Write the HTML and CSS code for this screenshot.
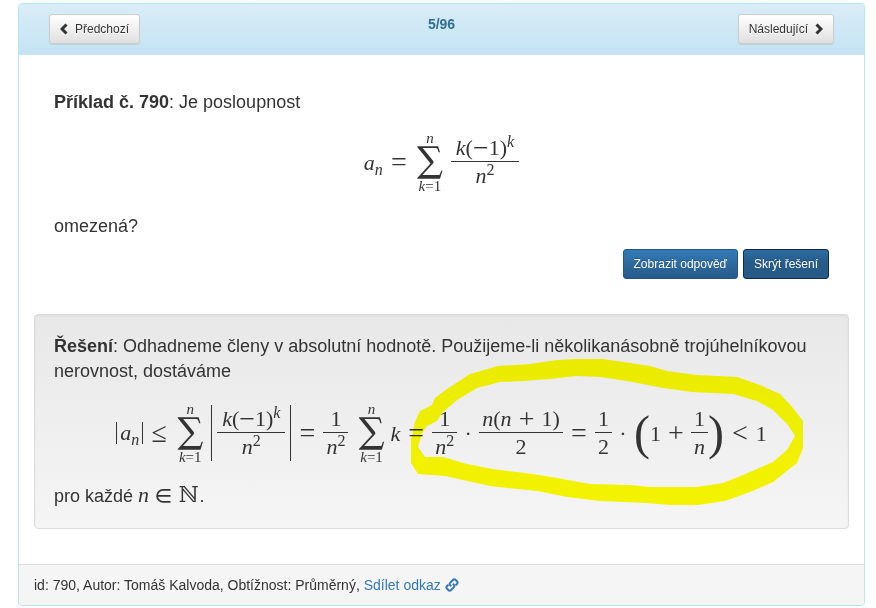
FILE: index.html
```html
<!DOCTYPE html>
<html lang="cs">
<head>
  <meta charset="UTF-8" />
  <title>Příklad č. 790</title>
  <link rel="stylesheet" href="styles.css">
</head>
<body>
<main class="panel">
  <header class="panel-heading">
    <button class="btn btn-default" type="button">
      <svg class="chevron" viewBox="0 0 8 12" aria-hidden="true"><path d="M6.5 1.5 2 6l4.500 4.500" /></svg>
      Předchozí
    </button>
    <h3 class="counter">5/96</h3>
    <button class="btn btn-default" type="button">
      Následující
      <svg class="chevron" viewBox="0 0 8 12" aria-hidden="true"><path d="M1.500 1.500 6 6l-4.500 4.500" /></svg>
    </button>
  </header>

  <div class="panel-body">
    <section class="task">
      <p><strong>Příklad č. 790</strong>: Je posloupnost</p>
      <div class="math">
        <span><i>a</i><sub><i>n</i></sub></span>
        <span class="rel">=</span>
        <span class="sum"><i>n</i><b>∑</b><span><i>k</i>=1</span></span>
        <span class="frac frac-wide"><span><i>k</i>(<span class="minus">−</span>1)<sup><i>k</i></sup></span><span><i>n</i><sup>2</sup></span></span>
      </div>
      <p>omezená?</p>
      <div class="actions">
        <button class="btn btn-primary" type="button">Zobrazit odpověď</button>
        <button class="btn btn-primary active" type="button">Skrýt řešení</button>
      </div>
    </section>

    <section class="well">
      <p><strong>Řešení</strong>: Odhadneme členy v absolutní hodnotě. Použijeme-li několikanásobně trojúhelníkovou nerovnost, dostáváme</p>
      <div class="math">
        <span class="abs"><i>a</i><sub><i>n</i></sub></span>
        <span class="rel">≤</span>
        <span class="sum"><i>n</i><b>∑</b><span><i>k</i>=1</span></span>
        <span class="abs abs-tall"><span class="frac frac-wide"><span><i>k</i>(<span class="minus">−</span>1)<sup><i>k</i></sup></span><span><i>n</i><sup>2</sup></span></span></span>
        <span class="rel">=</span>
        <span class="frac"><span>1</span><span><i>n</i><sup>2</sup></span></span>
        <span class="sum"><i>n</i><b>∑</b><span><i>k</i>=1</span></span>
        <i>k</i>
        <span class="rel">=</span>
        <span class="frac"><span>1</span><span><i>n</i><sup>2</sup></span></span>
        <span class="dot">·</span>
        <span class="frac"><span><i>n</i>(<i>n</i><span class="plus">+</span>1)</span><span>2</span></span>
        <span class="rel">=</span>
        <span class="frac"><span>1</span><span>2</span></span>
        <span class="dot">·</span>
        <span class="paren">(</span>
        <span>1</span>
        <span class="plus">+</span>
        <span class="frac"><span>1</span><span><i>n</i></span></span>
        <span class="paren">)</span>
        <span class="rel">&lt;</span>
        <span>1</span>
      </div>
      <p>pro každé <span class="inline-math"><i>n</i> <span class="symbol">∈</span> <span class="symbol">ℕ</span></span>.</p>
      <svg class="marker" viewBox="411 359 392 146" aria-hidden="true">
        <path fill-rule="evenodd" d="M411 463V440L415 422 420 411 432 405 435 398 447 389 470 374 498 366 530 364 557 360 577 359 603 359 630 363 650 366 667 371 697 375 737 377 760 385 780 394 793 408 803 421V448L797 463 773 482 750 492 725 501 698 505 670 505 647 503 600 501 567 497 537 491 490 486 445 476 418 474Z
          M425 457 443 457 463 463 492 469 533 474 557 478 590 484 630 485 650 487 697 487 723 483 743 475 773 462 787 450 795 436 788 425 773 410 757 401 733 394 692 392 663 388 627 381 600 377 577 376 550 379 523 381 500 382 477 388 457 400 442 413 437 421 427 426 422 433 418 447Z" />
      </svg>
    </section>
  </div>

  <footer class="panel-footer">
    id: 790, Autor: Tomáš Kalvoda, Obtížnost: Průměrný,
    <a href="#">Sdílet odkaz
      <svg class="link-icon" viewBox="0 0 14 14" aria-hidden="true"><path d="M6.200 8.300 5.300 7.400a2 2 0 0 1 0-2.800l2.600-2.600a2 2 0 0 1 2.800 0l1.200 1.200a2 2 0 0 1 0 2.800L10.600 7.300M7.800 5.700l.9.9a2 2 0 0 1 0 2.800L6.100 12a2 2 0 0 1-2.800 0L2.100 10.800a2 2 0 0 1 0-2.800L3.400 6.700" /></svg></a>
  </footer>
</main>
</body>
</html>
```
FILE: styles.css
```css
* {
  box-sizing: border-box;
}
body {
  margin: 3px 11px 0 18px;
  font-family: "Liberation Sans", Arial, sans-serif;
  font-size: 14px;
  line-height: 20px;
  color: #333;
  background: #fff;
}
p {
  margin: 0;
}
.panel {
  border: 1px solid #b5e7ef;
  border-radius: 4px;
  overflow: hidden;
}
.panel-heading {
  display: grid;
  grid-template-columns: 1fr auto 1fr;
  align-items: start;
  padding: 10px 30px 11px;
  background: linear-gradient(#d9edf7, #c4e3f3);
}
.panel-heading .btn:last-child {
  justify-self: end;
}
.panel-heading .btn:first-child {
  justify-self: start;
}
.counter {
  margin: 0;
  font-size: 14px;
  line-height: 20px;
  color: #31708f;
}
.btn {
  display: inline-flex;
  align-items: center;
  gap: 7px;
  height: 30px;
  padding: 0 10px;
  border-radius: 3px;
  font-family: inherit;
  font-size: 12px;
  cursor: pointer;
}
.btn-default {
  color: #333;
  border: 1px solid #ccc;
  background: linear-gradient(#fff, #e0e0e0);
  text-shadow: 0 1px 0 #fff;
  box-shadow: 0 1px 1px rgba(0,0,0,0.08);
}
.btn-primary {
  color: #fff;
  border: 1px solid #245580;
  background: linear-gradient(#337ab7, #265a88);
  text-shadow: 0 -1px 0 rgba(0,0,0,0.2);
}
.btn-primary.active {
  border-color: #122b40;
  background: linear-gradient(#2d6ca2, #265a88 50%);
}
.chevron {
  width: 8px;
  height: 12px;
  fill: none;
  stroke: #333;
  stroke-width: 3;
}
.panel-body {
  padding: 35px 15px;
}
.task {
  padding: 0 20px;
}
.task, .well {
  font-size: 18px;
  line-height: 25px;
}
.actions {
  display: flex;
  justify-content: flex-end;
  gap: 5px;
  margin: 10px 0 35px;
}
.well {
  position: relative;
  padding: 19px;
  border: 1px solid #dcdcdc;
  border-radius: 4px;
  background: linear-gradient(#e8e8e8, #f5f5f5);
  box-shadow: inset 0 1px 3px rgba(0,0,0,0.05);
}
.math {
  display: flex;
  justify-content: center;
  align-items: center;
  height: 62px;
  margin: 16px 0 21px;
  white-space: nowrap;
}
.math, .inline-math {
  font-family: "Liberation Serif", serif;
  font-size: 22px;
}
.well .math {
  margin: 18px 0;
}
.math sub, .math sup {
  font-size: 16px;
  line-height: 0;
}
.rel, .plus, .dot {
  display: inline-block;
  text-align: center;
}
.rel, .plus, .minus {
  font-size: 28px;
  line-height: 22px;
  vertical-align: -2px;
}
.rel {
  width: 32px;
}
.plus {
  width: 30px;
}
.dot {
  width: 22px;
}
.symbol, .sum b {
  font-family: "DejaVu Math TeX Gyre", "Liberation Serif", serif;
}
.sum {
  display: grid;
  justify-items: center;
  width: 30px;
  margin-right: 6px;
  font-size: 15px;
  line-height: 14px;
}
.frac + .sum {
  margin: 0 4px 0 8px;
}
.sum b {
  font-size: 31px;
  font-weight: normal;
  line-height: 34px;
}
.frac {
  display: grid;
  text-align: center;
  line-height: 28px;
}
.frac > span {
  height: 28px;
  padding: 0 3px;
}
.frac-wide > span {
  padding: 0 5px;
}
.frac > span:first-child {
  border-bottom: 1px solid #333;
}
.abs {
  padding: 0 3px;
  border: solid #333;
  border-width: 0 1px;
  line-height: 22px;
}
.abs-tall {
  padding: 0 5px;
}
.paren {
  font-size: 48px;
  line-height: 54px;
  font-weight: normal;
}
.marker {
  position: absolute;
  top: 44px;
  left: calc(50% - 31px);
  width: 392px;
  height: 146px;
  fill: #ff0;
  mix-blend-mode: multiply;
  pointer-events: none;
}
.panel-footer {
  padding: 10px 15px;
  border-top: 1px solid #ddd;
  background: #f5f5f5;
}
.panel-footer a {
  color: #337ab7;
  text-decoration: none;
}
.link-icon {
  width: 14px;
  height: 14px;
  vertical-align: -2px;
  fill: none;
  stroke: #337ab7;
  stroke-width: 2;
}
```
